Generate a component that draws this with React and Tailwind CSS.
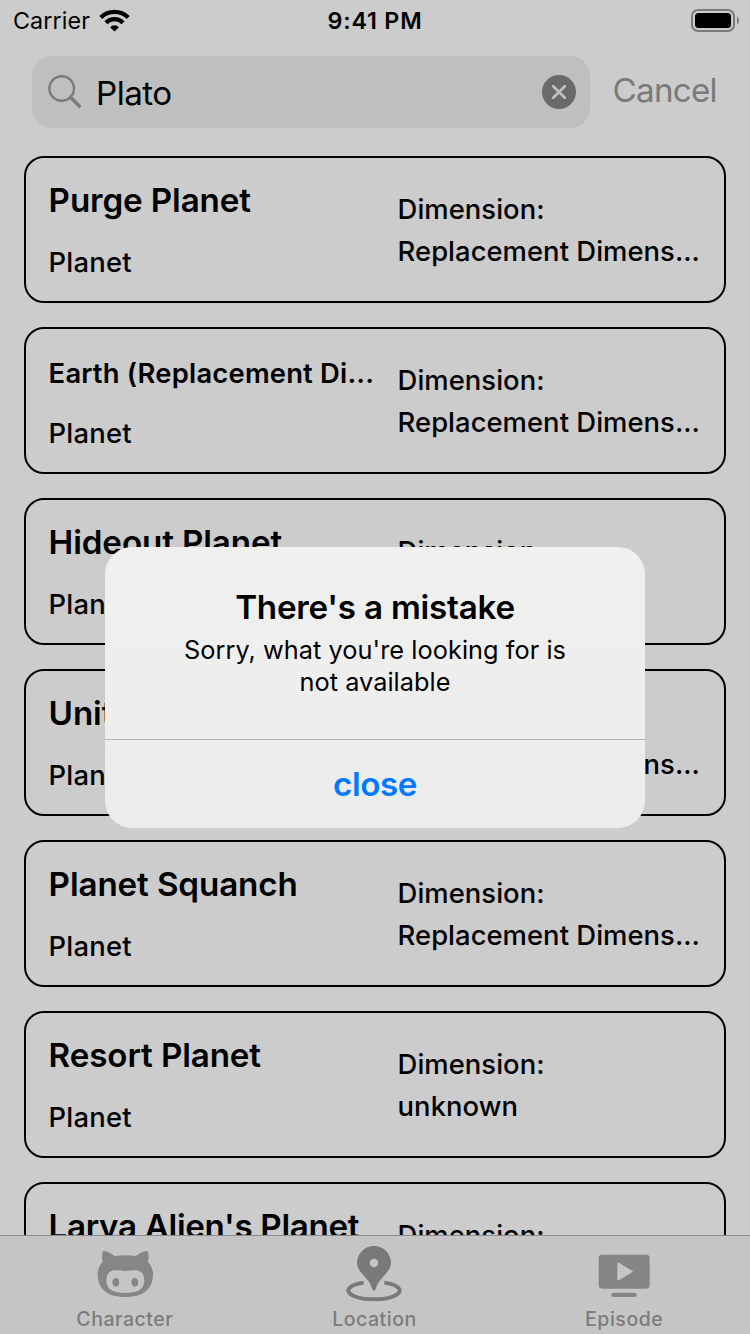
import React from "react";

const TITLE = "text-[33.2px] tracking-[-0.12px]";
const TITLE_TIGHT = "text-[33.2px] tracking-[-0.33px]";
const TITLE_SMALL = "pt-[2px] -mb-[2px] text-[27.4px] tracking-[0.2px]";

const locations = [
  { name: "Purge Planet", dimension: "Replacement Dimens...", size: TITLE },
  { name: "Earth (Replacement Di...", dimension: "Replacement Dimens...", size: TITLE_SMALL },
  { name: "Hideout Planet", dimension: "unknown", size: TITLE },
  { name: "Unity's Planet", dimension: "Replacement Dimens...", size: TITLE },
  { name: "Planet Squanch", dimension: "Replacement Dimens...", size: TITLE },
  { name: "Resort Planet", dimension: "unknown", size: TITLE },
  { name: "Larva Alien's Planet", dimension: "unknown", size: TITLE_TIGHT },
];

function WifiIcon() {
  return (
    <svg className="ml-2 h-6 w-8" viewBox="98 8.4 32 24" fill="none">
      <path d="M100.8 17 A19.3 19.3 0 0 1 128.2 17" stroke="black" strokeWidth="4.2" />
      <path d="M105.9 22.1 A12 12 0 0 1 123.1 22.1" stroke="black" strokeWidth="4.2" />
      <path d="M114.5 31 L110.1 26.6 A6.2 6.2 0 0 1 118.9 26.6 Z" fill="black" />
    </svg>
  );
}

function BatteryIcon() {
  return (
    <svg className="-mt-px h-6 w-[50px]" viewBox="691 8 50 24" fill="none">
      <rect x="692" y="9" width="42" height="21" rx="6" stroke="#7b7b7b" strokeWidth="2" />
      <rect x="695" y="12" width="36" height="15" rx="3.5" fill="black" />
      <path d="M737 15.6 Q739 17 739 19.5 Q739 22 737 23.4 Z" fill="#7b7b7b" />
    </svg>
  );
}

function StatusBar() {
  return (
    <div className="grid h-10 grid-cols-3 items-center pt-px text-[23.3px] leading-10">
      <div className="flex h-10 items-center pl-[13px]">
        <span className="tracking-[0.1px]">Carrier</span>
        <WifiIcon />
      </div>
      <div className="text-center font-semibold tracking-[0.8px]">9:41 PM</div>
      <div className="flex justify-end pr-[9px]">
        <BatteryIcon />
      </div>
    </div>
  );
}

function SearchHeader() {
  return (
    <div className="flex h-[116px] items-start pt-4 pl-8">
      <div className="flex h-[72px] w-[558px] shrink-0 items-center rounded-[20px] bg-[#bfbfbf] pr-[14px] pl-[15px]">
        <svg className="h-9 w-9 shrink-0" viewBox="46.5 74 36 36" fill="none" stroke="#7c7c7c">
          <circle cx="61.2" cy="88.5" r="12.3" strokeWidth="2.5" />
          <path d="M70 97.2 L78.8 106" strokeWidth="3.6" strokeLinecap="round" />
        </svg>
        <span className="mt-[2px] ml-[13px] flex-1 text-[33.2px] leading-10 tracking-[-0.55px]">Plato</span>
        <svg className="h-[34px] w-[34px]" viewBox="0 0 34 34" fill="none">
          <circle cx="17" cy="17" r="17" fill="#6a6a6b" />
          <path d="M11.2 11.2 L22.8 22.8 M22.8 11.2 L11.2 22.8" stroke="#c0c0c0" strokeWidth="2.7" strokeLinecap="round" />
        </svg>
      </div>
      <span className="mt-[14px] ml-[22.5px] text-[33.2px] leading-10 tracking-[-0.75px] text-[#7a7a7a]">Cancel</span>
    </div>
  );
}

function LocationCard({ name, dimension, size }) {
  return (
    <article className="flex h-[147px] shrink-0 rounded-[20px] border-2 border-black pl-[22.6px] whitespace-nowrap">
      <div className="w-[349px] shrink-0 pt-[22px]">
        <h2 className={`${size} leading-10 font-semibold`}>{name}</h2>
        <p className="mt-[26px] text-[27.4px] leading-8 font-medium tracking-[0.2px]">Planet</p>
      </div>
      <div className="pt-[30px] text-[27.4px] leading-[42px] font-medium tracking-[0.04px]">
        <p>Dimension:</p>
        <p>{dimension}</p>
      </div>
    </article>
  );
}

function CharacterIcon() {
  return (
    <svg className="mt-[14px] h-12 w-[56.67px]" viewBox="110 150 170 144">
      <path
        fill="#848784"
        fillRule="evenodd"
        d="M128 153 C136 151 152 159 163 168 C183 165 207 165 227 168 C238 159 254 151 262 153 C265 160 266 172 263 185 C272 195 278 208 278 222 C278 265 252 291 195 291 C138 291 112 265 112 222 C112 208 118 195 127 185 C124 172 125 160 128 153Z M165 211 C180 211 185 213 195 213 C205 213 210 211 225 211 C243 211 252 224 252 241 C252 270 230 279 195 279 C160 279 138 270 138 241 C138 224 147 211 165 211Z"
      />
      <ellipse cx="166.5" cy="247" rx="10" ry="13" fill="#848784" />
      <ellipse cx="223.5" cy="247" rx="10" ry="13" fill="#848784" />
    </svg>
  );
}

function LocationIcon() {
  return (
    <svg className="mt-[9.33px] h-[56.67px] w-14" viewBox="108 136 168 170">
      <path
        fill="#797979"
        fillRule="evenodd"
        d="M192 139 A51 51 0 0 1 243 190 C243 218 205 236 198 266 Q197 273 192 273 Q187 273 186 266 C179 236 141 218 141 190 A51 51 0 0 1 192 139Z M192 177.5 A12.5 12.5 0 1 0 192 202.5 A12.5 12.5 0 1 0 192 177.5Z"
      />
      <path d="M161 249 A77 26 0 1 0 223 249" fill="none" stroke="#797979" strokeWidth="11.5" />
    </svg>
  );
}

function EpisodeIcon() {
  return (
    <svg className="mt-[18.33px] h-[43.67px] w-[52.33px]" viewBox="144 163 157 131">
      <rect x="146" y="165" width="153" height="102" rx="10" fill="#848684" />
      <rect x="184" y="279" width="76" height="13" rx="6" fill="#848684" />
      <path d="M205 192 L205 239 L245 215.5Z" fill="#c5c5c5" stroke="#c5c5c5" strokeWidth="6" strokeLinejoin="round" />
    </svg>
  );
}

const tabs = [
  { label: "Character", Icon: CharacterIcon },
  { label: "Location", Icon: LocationIcon },
  { label: "Episode", Icon: EpisodeIcon },
];

function TabBar() {
  return (
    <nav className="grid h-[99px] shrink-0 grid-cols-3 border-t border-[#8c8c8c] bg-[#c5c5c5] pr-px">
      {tabs.map(({ label, Icon }) => (
        <div key={label} className="flex flex-col items-center justify-between pb-[3px]">
          <Icon />
          <span className="text-[19.5px] leading-6 font-medium tracking-[0.52px] text-[#7c7c7c]">{label}</span>
        </div>
      ))}
    </nav>
  );
}

function AlertDialog() {
  return (
    <div className="absolute inset-0 flex justify-center pt-[547px]">
      <div className="flex h-[281px] w-[540px] flex-col overflow-hidden rounded-[27px] bg-linear-to-b from-[#f0f0ef] to-[#ececec] text-center">
        <div className="h-48 pt-10">
          <h1 className="text-[33.2px] leading-10 font-semibold tracking-[-0.22px]">There's a mistake</h1>
          <p className="mt-[7px] text-[25.3px] leading-8 tracking-[0.05px]">
            Sorry, what you're looking for is
            <br />
            not available
          </p>
        </div>
        <button className="flex-1 border-t border-[#b0b3b0] pt-[2px] text-[33.2px] font-semibold tracking-[-0.4px] text-[#007aff]">
          close
        </button>
      </div>
    </div>
  );
}

export default function App() {
  return (
    <div className="relative flex h-[1334px] w-[750px] flex-col overflow-hidden bg-[#cccccc] font-['Inter',sans-serif] text-black">
      <StatusBar />
      <SearchHeader />
      <main className="flex min-h-0 flex-1 flex-col gap-6 overflow-hidden px-6">
        {locations.map((location) => (
          <LocationCard key={location.name} {...location} />
        ))}
      </main>
      <TabBar />
      <AlertDialog />
    </div>
  );
}
